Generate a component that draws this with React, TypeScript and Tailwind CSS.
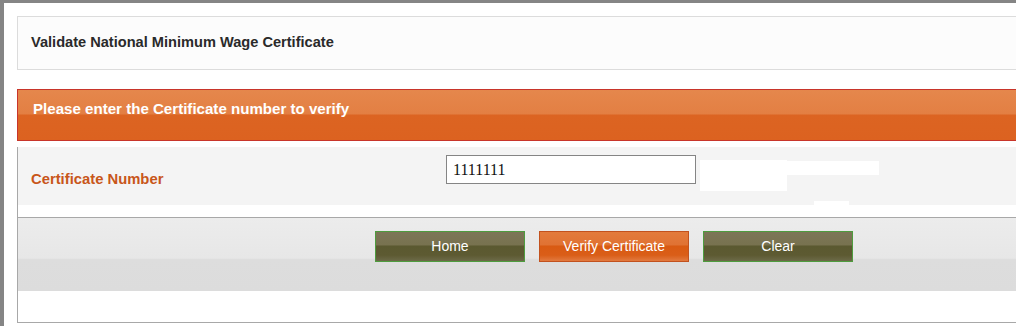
export default function App() {
  return (
    <div className="h-[326px] w-[1016px] overflow-hidden border-l-4 border-t-[3px] border-[#858585] bg-white font-['Liberation_Sans',Arial,sans-serif]">
      <div className="w-[1040px] pl-[13px] pt-[13px]">
        {/* title */}
        <div className="flex h-[54px] items-center border border-[#dcdcdc] bg-[#fcfcfc] pl-[13px] text-[14.6px] font-bold text-[#2a2a2a]">
          Validate National Minimum Wage Certificate
        </div>

        {/* orange header */}
        <div className="mt-[19px] h-[52px] border border-[#c8352a] bg-[linear-gradient(to_bottom,#e5874c_0%,#e37f43_48%,#dc6422_50%,#dc6220_100%)] pl-[15px] pt-[8px] text-[15.1px] font-bold text-white">
          Please enter the Certificate number to verify
        </div>

        <div className="border-b border-l border-[#a8a8a8]">
          {/* input row */}
          <div className="relative mt-[6px] flex h-[58px] bg-[#f4f4f4]">
            <div className="w-[428px] pl-[13px] pt-[21px] text-[14.8px] font-bold text-[#c8561a]">Certificate Number</div>
            <div className="pt-[8px]">
              <input
                defaultValue="1111111"
                className="h-[29px] w-[250px] border border-[#858585] bg-white px-[6px] font-['Liberation_Serif',serif] text-[16px] text-[#111] outline-none"
              />
            </div>
            <div className="absolute left-[682px] top-[13px] h-[31px] w-[87px] bg-white" />
            <div className="absolute left-[769px] top-[14px] h-[14px] w-[92px] bg-white" />
            <div className="absolute left-[796px] top-[54px] h-[5px] w-[35px] bg-white" />
          </div>

          {/* button bar */}
          <div className="mt-[12px] flex h-[74px] gap-[14px] border-t border-[#a8a8a8] bg-[linear-gradient(to_bottom,#ececec_0%,#e7e7e7_55%,#dddddd_57%,#dcdcdc_100%)] pl-[357px] pt-[13px]">
            <button className="h-[31px] w-[150px] border border-[#4e9c3e] bg-[linear-gradient(to_bottom,#7c7657_0%,#78724f_45%,#5b5930_48%,#5d5a32_80%,#6c6a48_100%)] text-[14px] text-white">
              Home
            </button>
            <button className="h-[31px] w-[150px] border border-[#c2521e] bg-[linear-gradient(to_bottom,#e37b3c_0%,#e07233_45%,#d95a12_48%,#da5e18_80%,#e27a40_100%)] text-[14px] text-white">
              Verify Certificate
            </button>
            <button className="h-[31px] w-[150px] border border-[#4e9c3e] bg-[linear-gradient(to_bottom,#7c7657_0%,#78724f_45%,#5b5930_48%,#5d5a32_80%,#6c6a48_100%)] text-[14px] text-white">
              Clear
            </button>
          </div>
          <div className="h-[31px]" />
        </div>
      </div>
    </div>
  );
}
